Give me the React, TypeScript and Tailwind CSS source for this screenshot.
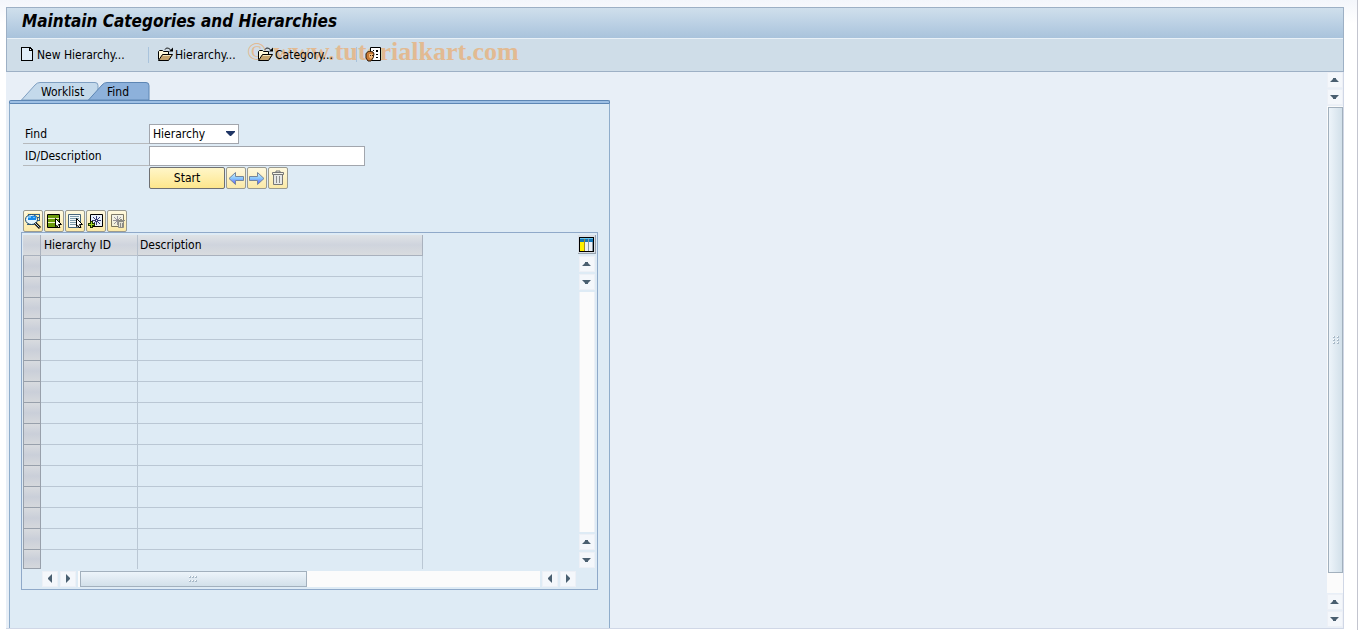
import React, { useState } from 'react';

type Direction = 'up' | 'down' | 'left' | 'right';

const ROW_COUNT = 15;

const ARROWS: Record<Direction, string> = {
  up: 'M2 9h9L8 6V5H5v1z',
  down: 'M2 5h9L8 8v1H5V8z',
  left: 'M5 6l4-4v9L5 7z',
  right: 'M9 6L5 2v9l4-4z',
};

const ScrollButton = ({ direction }: { direction: Direction }) => (
  <button
    type="button"
    aria-label={`Scroll ${direction}`}
    className="size-4 shrink-0 border border-[#edf0f6] bg-[#f4f7fb]"
  >
    <svg viewBox="0 0 14 14" width="14" height="14" className="block">
      <path d={ARROWS[direction]} fill="#4a5f70" />
    </svg>
  </button>
);

const Grip = ({ vertical = false }: { vertical?: boolean }) => (
  <svg
    width={vertical ? 6 : 9}
    height={vertical ? 9 : 6}
    viewBox={vertical ? '0 0 6 9' : '0 0 9 6'}
    shapeRendering="crispEdges"
  >
    {[0, 1, 2].map(i =>
      [0, 1].map(j => {
        const x = vertical ? j * 4 : i * 3;
        const y = vertical ? i * 3 : j * 4;
        return (
          <g key={`${i}${j}`}>
            <path d={`M${x} ${y}h2v1h-1v1h-1z`} fill="#ffffff" />
            <path d={`M${x + 1} ${y}h1v2h-2v-1h1z`} fill="#a9bac8" />
          </g>
        );
      })
    )}
  </svg>
);

const PageIcon = () => (
  <svg width="13" height="15" viewBox="0 0 13 15" shapeRendering="crispEdges">
    <path d="M1 0h8l3 3v11H0V0z" fill="#000" />
    <path d="M1 1h7v3h3v9H1z" fill="#e0edf8" />
    <path d="M9 2l1 1H9z" fill="#fff" />
  </svg>
);

const FolderIcon = () => (
  <svg width="17" height="15" viewBox="0 0 17 15">
    <path d="M1.500 12.500v-8l1-1h3l1 1h5v3" fill="#fff8d8" stroke="#000" />
    <path d="M1.500 13.500l4-6h10l-4 6z" fill="#c4a36c" stroke="#000" />
    <path d="M6 8.500h8" stroke="#f3e3b6" />
    <path d="M8 2.500c1-2 4-2 6 1" fill="none" stroke="#000" />
    <path d="M12 4.500h4v-4z" fill="#000" />
  </svg>
);

const RoleIcon = () => (
  <svg width="16" height="15" viewBox="0 0 16 15">
    <path d="M5.500 .5h10v13h-10z" fill="#fff" stroke="#000" />
    <path d="M8 3h1v1H8zM11 3h2v2h-2zM11 7h2v1h-2zM11 10h2v1h-2z" fill="#000" />
    <path d="M1 7c1-3 4-3 7-2l1 2-1 4-2 3H3L1 11z" fill="#c97a35" stroke="#2d1808" />
    <path d="M4 7h4v3l-2 2-2-2z" fill="#f1b776" />
    <path d="M5 8h1v1H5zM7 8h1v1H7z" fill="#2d1808" />
  </svg>
);

const BlueArrow = ({ flip = false }: { flip?: boolean }) => (
  <svg width="16" height="15" viewBox="0 0 16 15">
    <defs>
      <linearGradient id={flip ? 'arrow-right' : 'arrow-left'} x1="0" y1="0" x2="0" y2="1">
        <stop offset="0" stopColor="#d4f4ff" />
        <stop offset="0.5" stopColor="#88c5fb" />
        <stop offset="1" stopColor="#5a50ff" />
      </linearGradient>
    </defs>
    <path
      d={flip ? 'M.5 5.500h8V1.500l6.500 6-6.500 6v-4h-8z' : 'M15.500 5.500h-8V1.500l-6.500 6 6.500 6v-4h8z'}
      fill={flip ? 'url(#arrow-right)' : 'url(#arrow-left)'}
      stroke="#76869b"
    />
  </svg>
);

const TrashIcon = () => (
  <svg width="14" height="16" viewBox="0 0 14 16">
    <path d="M2.500 4.500h9v10h-9z" fill="#e6e7e6" stroke="#777" />
    <path d="M5.500 6v7M8.500 6v7" stroke="#8c8c8c" />
    <path d="M1.500 2.500h11v2h-11zM5 2V1h4v1" fill="#f5f3e6" stroke="#777" />
  </svg>
);

const DetailsIcon = () => (
  <svg width="18" height="18" viewBox="0 0 18 18" className="shrink-0">
    <path d="M3 1h13v13H3z" fill="#ffedac" />
    <path d="M4 2.500h12M13 5.500h3M13 8.500h3M3 12.500h7M15.500 2v7" stroke="#315f85" />
    <ellipse cx="7.500" cy="7.500" rx="6" ry="5" fill="#e6f6ff" stroke="#174569" />
    <path d="M4 4h8v4H4z" fill="#1687e8" />
    <path d="M4 4h3v2H4zM9 5h2v1H9z" fill="#68c3ff" />
    <path d="M11 11l5 5" stroke="#111" strokeWidth="3" />
    <path d="M11 11l4.500 4.500" stroke="#b8d4e7" />
  </svg>
);

const ListIcon = ({ selected = false }: { selected?: boolean }) => (
  <svg width="16" height="16" viewBox="0 0 16 16">
    <path d="M1.500 1.500h12v13h-12z" fill={selected ? '#eef3c8' : '#f3f8f8'} stroke={selected ? '#000' : '#46647a'} />
    {selected ? (
      <path d="M2 2h11v3H2zM2 6h11v3H2zM2 10h11v4H2z" fill="#6c9a0c" />
    ) : (
      <path d="M3 3.500h9M3 5.500h9M3 7.500h9M3 9.500h9M3 11.500h9" stroke="#7d9bab" />
    )}
    <path d="M9.500 5.500l6 6h-3l1.500 3h-2l-1-2-1.500 1z" fill="#fff" stroke="#000" />
  </svg>
);

const StarPageIcon = ({ removing = false }: { removing?: boolean }) => (
  <svg width="16" height="16" viewBox="0 0 16 16">
    <g opacity={removing ? 0.5 : 1}>
      <path d="M2.500 1.500h12v12h-12z" fill="#e8f0fb" stroke="#000" />
      <path d="M8.500 3v9M4 7.500h9M5 4l7 7M12 4l-7 7" stroke="#363a75" />
      <path d="M8 7h1v1H8z" fill="#fff" />
    </g>
    {removing ? (
      <g>
        <path d="M9.500 8.500h5v6h-5z" fill="#e4e2d4" stroke="#8b8b84" />
        <path d="M8 7.500h8M11 6.500h2M11.500 10v4M13.500 10v4" stroke="#8b8b84" />
      </g>
    ) : (
      <g>
        <path d="M3.500 8v7M0 11.500h7" stroke="#1b3000" strokeWidth="3" />
        <path d="M3.500 9v5M1 11.500h5" stroke="#a4dc24" />
      </g>
    )}
  </svg>
);

const ColumnsIcon = () => (
  <svg width="15" height="15" viewBox="0 0 15 15" shapeRendering="crispEdges">
    <path d="M0 0h15v15H0z" fill="#000" />
    <path d="M1 1h13v4H1z" fill="#1676b6" />
    <path d="M1 1h13v1H1z" fill="#63c5ef" />
    <path d="M1 5h4v9H1z" fill="#fff000" />
    <path d="M6 5h3v9H6zM10 5h4v9h-4z" fill="#edf0f6" />
    <path d="M5 2h1v12H5z" fill="#a78b24" />
    <path d="M9 2h1v12H9zM13 5h1v9h-1z" fill="#8798a6" />
  </svg>
);

interface IconButtonProps {
  label: string;
  children: React.ReactNode;
}

const IconButton = ({ label, children }: IconButtonProps) => (
  <button
    type="button"
    aria-label={label}
    className="flex h-[22px] w-5 items-center justify-center rounded-xs border border-[#9a9a90] bg-linear-to-b from-[#fff9df] to-[#fbe9a6]"
  >
    {children}
  </button>
);

const Header = () => (
  <header className="relative border border-[#9db0c5] bg-[#cfdde8]">
    <h1 className="flex h-[30px] items-center bg-linear-to-b from-[#cfdfec] to-[#a9c3dc] pb-1 pl-[15px] text-[17px] font-bold italic">
      Maintain Categories and Hierarchies
    </h1>
    <div
      aria-hidden="true"
      className="pointer-events-none absolute top-7 left-60 font-['Liberation_Serif',serif] text-[26px] leading-8 font-bold whitespace-nowrap text-[#e2ba92]"
    >
      <span className="font-normal">©</span> www.tutorialkart.com
    </div>
    <nav className="relative flex h-[33px] items-center border-t border-[#e9f1f7] pb-px pl-[14px]">
      <button type="button" className="flex w-[127px] items-center gap-[3px]">
        <PageIcon /> New Hierarchy...
      </button>
      <button type="button" className="flex w-[107px] items-center gap-px border-l border-[#a9c3dc] pl-2">
        <FolderIcon /> Hierarchy...
      </button>
      <button type="button" className="flex w-[101px] items-center gap-px pl-[2px]">
        <FolderIcon /> Category...
      </button>
      <button type="button" aria-label="Assign role" className="border-l border-[#a9c3dc] pl-2">
        <RoleIcon />
      </button>
    </nav>
  </header>
);

const Tabs = () => (
  <div role="tablist" className="flex pl-3">
    <button type="button" role="tab" aria-selected="false" className="relative h-[18px] w-[86px] pl-5 text-left">
      <svg width="78" height="18" viewBox="0 0 78 18" className="absolute inset-0">
        <path d="M.5 18L14 3q2-2.500 5-2.500h55q3 0 3 3V18z" fill="#c4d9eb" stroke="#7f9fc1" />
      </svg>
      <span className="relative block leading-5">Worklist</span>
    </button>
    <button type="button" role="tab" aria-selected="true" className="relative h-[18px] w-[43px] text-left">
      <svg width="62" height="18" viewBox="0 0 62 18" className="absolute inset-y-0 right-0">
        <path d="M.5 18L14 3q2-2.500 5-2.500h39q3 0 3 3V18z" fill="#8db1db" stroke="#5d86b4" />
      </svg>
      <span className="relative block leading-5">Find</span>
    </button>
  </div>
);

const SearchForm = () => {
  const [kind, setKind] = useState('Hierarchy');
  const [query, setQuery] = useState('');

  return (
    <form
      className="grid grid-cols-[126px_auto] grid-rows-[21px_20px_22px] gap-y-px"
      onSubmit={e => e.preventDefault()}
    >
      <label htmlFor="kind" className="flex h-5 items-center border-b border-[#b6b9bc] pl-[2px]">
        Find
      </label>
      <div className="relative h-5 w-[90px]">
        <select
          id="kind"
          value={kind}
          onChange={e => setKind(e.target.value)}
          className="block h-5 w-full appearance-none border border-[#a2a6ad] bg-white pl-[3px] outline-none"
        >
          <option>Hierarchy</option>
          <option>Category</option>
        </select>
        <svg width="9" height="5" viewBox="0 0 9 5" className="pointer-events-none absolute top-[7px] right-1">
          <path d="M0 0h9v1L5 5H4L0 1z" fill="#1f3565" />
        </svg>
      </div>
      <label htmlFor="query" className="flex h-5 items-center border-b border-[#b6b9bc] pl-[2px]">
        ID/Description
      </label>
      <input
        id="query"
        value={query}
        onChange={e => setQuery(e.target.value)}
        className="h-5 w-[216px] border border-[#a2a6ad] bg-white px-1 outline-none"
      />
      <div className="col-start-2 flex gap-px">
        <button
          type="submit"
          className="h-[22px] w-[76px] rounded-xs border border-[#6f7072] bg-linear-to-b from-[#fff6c8] to-[#fde68b]"
        >
          Start
        </button>
        <IconButton label="Back"><BlueArrow /></IconButton>
        <IconButton label="Forward"><BlueArrow flip /></IconButton>
        <IconButton label="Clear"><TrashIcon /></IconButton>
      </div>
    </form>
  );
};

const ResultTable = () => (
  <table className="w-[400px] table-fixed border-separate border-spacing-0">
    <colgroup>
      <col className="w-[18px]" />
      <col className="w-[97px]" />
      <col className="w-[285px]" />
    </colgroup>
    <thead>
      <tr className="text-left">
        <th aria-label="Select" className="h-[21px] border-r border-b border-[#a9b1bd] bg-linear-to-b from-[#d9dcdf] via-[#cdd2db] to-[#d9dcdf] p-0" />
        <th className="border-r border-b border-[#b7c1cd] bg-linear-to-b from-[#dfe3e6] via-[#cfd4dd] to-[#d9dcdf] p-0 pl-[3px] font-normal">Hierarchy ID</th>
        <th className="border-r border-b border-[#a9b1bd] bg-linear-to-b from-[#dfe3e6] via-[#cfd4dd] to-[#d9dcdf] p-0 pl-[2px] font-normal">Description</th>
      </tr>
    </thead>
    <tbody>
      {Array.from({ length: ROW_COUNT }, (_, i) => (
        <tr key={i} className="group">
          <td className="h-[21px] border-x border-b border-[#98a0ab] bg-linear-to-b from-[#d8dbdf] via-[#cacfd9] to-[#d5d8dc] p-0 group-last:h-[19px]" />
          <td className="border-r border-b border-[#bac7d4] p-0 group-last:border-b-0" />
          <td className="border-r border-b border-[#bac7d4] p-0 group-last:border-b-0" />
        </tr>
      ))}
    </tbody>
  </table>
);

const ResultGrid = () => (
  <section className="border border-[#8fa9c9] px-px py-[2px]">
    <div className="flex justify-between">
      <ResultTable />
      <div className="flex w-[18px] flex-col items-center gap-[2px] pb-px">
        <button
          type="button"
          aria-label="Configure columns"
          className="flex h-[19px] w-[18px] shrink-0 items-center justify-center border-r border-b border-[#98a3af] bg-[#d9dee4]"
        >
          <ColumnsIcon />
        </button>
        <ScrollButton direction="up" />
        <ScrollButton direction="down" />
        <div className="w-4 flex-1 border-x border-[#edf0f6] bg-[#fbfbfb]" />
        <ScrollButton direction="up" />
        <ScrollButton direction="down" />
      </div>
    </div>
    <div className="mt-[2px] flex gap-[2px] pr-5 pl-[19px]">
      <ScrollButton direction="left" />
      <ScrollButton direction="right" />
      <div className="flex h-4 flex-1 bg-[#fbfbfb] pl-[2px]">
        <div className="flex w-[227px] items-center justify-center border border-[#a2b0bd] bg-linear-to-b from-[#edf4fa] to-[#d2e0ea]">
          <Grip />
        </div>
      </div>
      <ScrollButton direction="left" />
      <ScrollButton direction="right" />
    </div>
  </section>
);

const FindPanel = () => (
  <div className="flex w-[601px] flex-col pt-[10px]">
    <Tabs />
    <div className="h-[3px] rounded-t-xs border border-b-0 border-[#5d86b4] bg-[#9dbfe4]" />
    <div className="flex-1 border-x border-t border-[#8fadcb] border-t-[#5d86b4] bg-[#deebf5] px-[11px] pt-5">
      <div className="pl-[2px]">
        <SearchForm />
      </div>
      <div className="mt-[21px] flex gap-px pl-[2px]">
        <IconButton label="Details"><DetailsIcon /></IconButton>
        <IconButton label="Select all"><ListIcon selected /></IconButton>
        <IconButton label="Deselect all"><ListIcon /></IconButton>
        <IconButton label="Add to worklist"><StarPageIcon /></IconButton>
        <IconButton label="Remove from worklist"><StarPageIcon removing /></IconButton>
      </div>
      <ResultGrid />
    </div>
  </div>
);

const PageScrollbar = () => (
  <div className="flex w-4 flex-col gap-px pb-px">
    <ScrollButton direction="up" />
    <ScrollButton direction="down" />
    <div className="flex flex-1 flex-col bg-[#fbfbfb] pt-px pb-5 pl-px">
      <div className="flex flex-1 items-center justify-center border border-[#a2b0bd] bg-linear-to-r from-[#edf4fa] to-[#d2e0ea]">
        <Grip vertical />
      </div>
    </div>
    <ScrollButton direction="up" />
    <ScrollButton direction="down" />
  </div>
);

export default function App() {
  return (
    <div className="flex min-h-screen flex-col border-r border-[#c3c5cf] bg-linear-to-b from-[#f3f6fb] to-white to-[24px] pt-[7px] pr-[13px] pb-px pl-[6px] font-['DejaVu_Sans_Condensed','DejaVu_Sans',sans-serif] text-xs text-black [font-stretch:condensed]">
      <Header />
      <main className="flex flex-1 justify-between border-r border-b border-[#d0d7e6] bg-[#e8eff7] pl-[3px]">
        <FindPanel />
        <PageScrollbar />
      </main>
    </div>
  );
}
